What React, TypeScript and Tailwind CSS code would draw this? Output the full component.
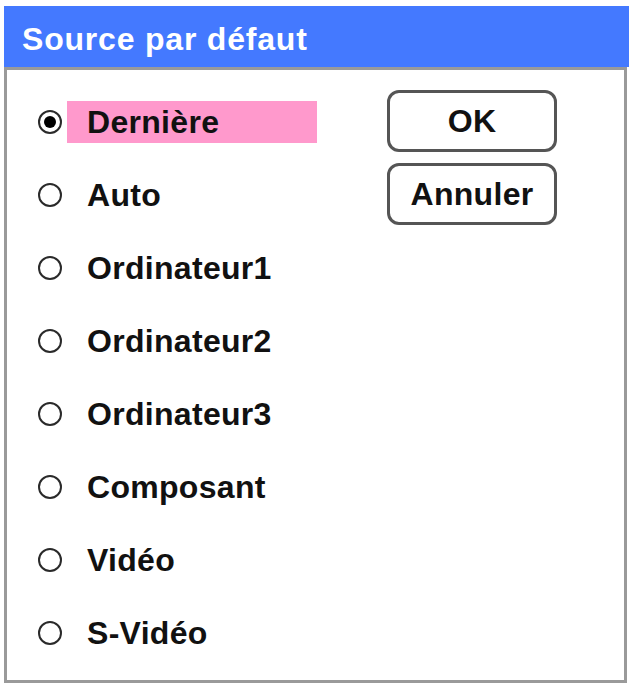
import React from 'react';

const sources = [
  'Dernière',
  'Auto',
  'Ordinateur1',
  'Ordinateur2',
  'Ordinateur3',
  'Composant',
  'Vidéo',
  'S-Vidéo',
];

function Radio({ checked }: { checked: boolean }) {
  return (
    <svg width="26" height="26" viewBox="0 0 26 26" className="shrink-0">
      <circle cx="13" cy="13" r="11" fill="white" stroke="#2a2a2a" strokeWidth="2" />
      {checked && <circle cx="13" cy="13" r="6" fill="#000" />}
    </svg>
  );
}

export default function App() {
  const selected = 0;
  return (
    <div className="w-[629px] h-[685px] bg-white pt-[6px] pl-[4px] font-['Liberation_Sans',Arial,sans-serif] font-bold text-[#111]">
      {/* Title bar */}
      <div className="h-[61px] w-[625px] bg-[#4479ff] flex items-center pl-[18px] pt-[4px]">
        <span className="text-white text-[32px] tracking-[0.8px]">Source par défaut</span>
      </div>

      {/* Body */}
      <div className="w-[623px] h-[616px] border-[3px] border-[#9a9a9a] flex">
        <div className="w-[380px] pt-[15px] flex flex-col">
          {sources.map((name, i) => (
            <div key={name} className="h-[73px] flex items-center pl-[30px]">
              <Radio checked={i === selected} />
              <div
                className={
                  'ml-[4px] w-[250px] h-[42px] flex items-center pl-[20px] text-[32px] tracking-[0.3px] ' +
                  (i === selected ? 'bg-[#ff99cc]' : '')
                }
              >
                {name}
              </div>
            </div>
          ))}
        </div>

        <div className="pt-[20px] flex flex-col gap-[11px]">
          <button className="w-[170px] h-[62px] border-[3px] border-[#555] rounded-[12px] bg-white text-[32px] tracking-[0.3px] flex items-center justify-center">
            OK
          </button>
          <button className="w-[170px] h-[62px] border-[3px] border-[#555] rounded-[12px] bg-white text-[32px] tracking-[0.3px] flex items-center justify-center">
            Annuler
          </button>
        </div>
      </div>
    </div>
  );
}
